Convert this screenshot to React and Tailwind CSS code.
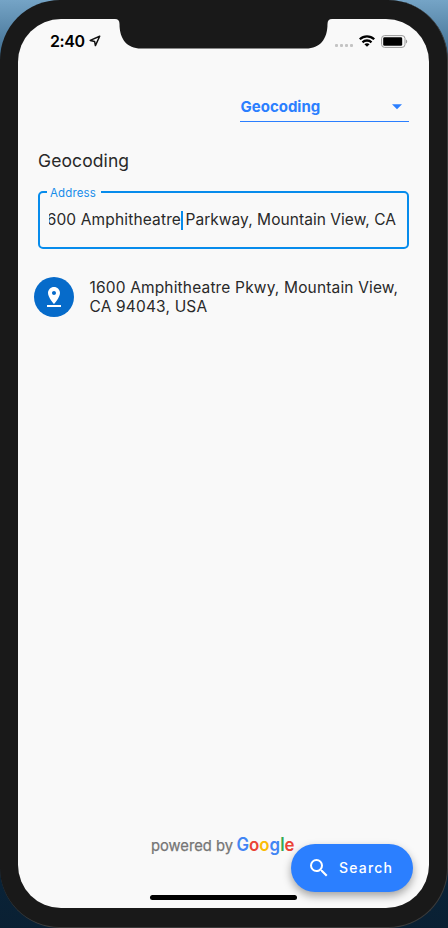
import React from "react";

function Notch() {
  return (
    <svg className="absolute left-[97px] top-0 h-[31px] w-[220px]" viewBox="0 0 220 31" fill="#191919">
      <path d="M0 -1V0C3 0 4.500 1.500 4.500 5C4.500 20 12 29.500 26 29.500H191C205 29.500 212.500 20 212.500 5C212.500 1.500 214 0 217 0V-1Z" />
    </svg>
  );
}

function StatusBar() {
  return (
    <header className="relative flex h-[45px] items-center pl-[32px] pr-[21px]">
      <Notch />
      <span className="mb-[1px] text-[16px] font-semibold leading-none tracking-[-0.400px] text-black">2:40</span>
      <svg className="mb-[2px] ml-[4px] h-[12px] w-[12px]" viewBox="0 0 12 12" fill="none" stroke="#111" strokeWidth="1.500" strokeLinejoin="round">
        <path d="M10.700 1.300L1.200 5.400L5.600 6.400L6.400 10.600Z" />
      </svg>
      <div className="ml-auto flex items-center">
        <div className="mt-[8px] flex gap-[1.500px]">
          {[0, 1, 2, 3].map((dot) => (
            <i key={dot} className="block h-[3.500px] w-[3.500px] rounded-[1px] bg-[#c4c4c4]" />
          ))}
        </div>
        <svg className="mb-[2px] ml-[6px] h-[12px] w-[16px]" viewBox="0 0 16 12" fill="none" stroke="#000" strokeWidth="2.300">
          <path d="M0.800 4.300C4.900 .3 11.100 .3 15.200 4.300" />
          <path d="M3.500 7.300C6 4.900 10 4.900 12.500 7.300" />
          <path d="M8 11.800L5.400 9.200C6.800 7.900 9.200 7.900 10.600 9.200Z" fill="#000" stroke="none" />
        </svg>
        <svg className="mb-[1px] ml-[6px] h-[13px] w-[27px]" viewBox="0 0 27 13">
          <rect x=".6" y=".6" width="23.400" height="11.800" rx="3" fill="none" stroke="#999" />
          <rect x="2.200" y="2.200" width="19" height="8.600" rx="1.300" fill="#000" />
          <path d="M25 4.500C26.600 5.200 26.600 7.800 25 8.500Z" fill="#999" />
        </svg>
      </div>
    </header>
  );
}

function GoogleAttribution() {
  return (
    <svg className="h-[26px] w-[150px] overflow-visible" viewBox="0 0 150 26" fontFamily="Inter, sans-serif">
      <text x="1" y="17" fontSize="15" fill="#757575" stroke="#757575" strokeWidth=".25" textLength="82" lengthAdjust="spacingAndGlyphs">powered by</text>
      <text x="86.500" y="17" fontSize="18" fontWeight="600" textLength="58" lengthAdjust="spacingAndGlyphs">
        <tspan fill="#4285f4">G</tspan><tspan fill="#ea4335">o</tspan><tspan fill="#fbbc05">o</tspan><tspan fill="#4285f4">g</tspan><tspan fill="#34a853">l</tspan><tspan fill="#ea4335">e</tspan>
      </text>
    </svg>
  );
}

export default function App() {
  return (
    <div className="h-[928px] w-[448px] overflow-hidden bg-[linear-gradient(180deg,#75a4c6_0,#416f92_55px,#232323_75px,#232323_840px,#092338_870px,#0a2033_928px)] font-['Inter','Liberation_Sans',sans-serif]">
      <div className="h-[928px] w-[448px] rounded-[60px] border border-l-0 border-t-0 border-[#3b3b3b] bg-[#191919] pl-[18px] pt-[19px]">
        <div className="relative flex h-[889px] w-[411px] flex-col overflow-hidden rounded-[43px] bg-[#f9f9f9]">
          <StatusBar />
          <main className="flex flex-1 flex-col px-[20px]">
            <div className="mt-[30px] flex h-[28px] w-[169px] justify-between self-end border-b border-[#2b7fff] pr-[7px] pl-[0.500px] pt-[3px] text-[#2b7fff]">
              <span className="pt-[1px] text-[15px] font-bold leading-[18px]">Geocoding</span>
              <svg className="mt-[7px] h-[6px] w-[10px]" viewBox="0 0 10 6" fill="currentColor">
                <path d="M0 .3H10L5 5.300Z" />
              </svg>
            </div>
            <h1 className="mt-[28px] text-[17.500px] font-normal leading-[22px] tracking-[0.100px] text-[#292929]">Geocoding</h1>
            <div className="relative mt-[18.500px] h-[58.500px] rounded-[5px] border-2 border-[#078cec] pl-[9px] pr-[11px]">
              <label className="absolute left-[7px] top-[-6.500px] bg-[#f9f9f9] pl-[3px] pr-[5px] text-[11.500px] leading-[15px] tracking-[0.150px] text-[#168cea]">Address</label>
              <div className="flex h-[55px] items-center justify-end overflow-hidden whitespace-nowrap text-[15.500px] text-[#292929]">
                <span className="tracking-[0.150px]">1600 Amphitheatre</span>
                <i className="mr-[-2px] h-[19px] w-[2px] shrink-0 bg-[#078cec]" />
                <span className="whitespace-pre tracking-[0.050px]"> Parkway, Mountain View, CA</span>
              </div>
            </div>
            <div className="-ml-[4px] mt-[28px] flex h-[40px] items-center">
              <div className="flex h-[40px] w-[40px] shrink-0 items-center justify-center rounded-full bg-[#066bca]">
                <svg className="h-[24px] w-[24px]" viewBox="0 0 24 24" fill="white">
                  <path d="M18 8c0-3.310-2.690-6-6-6S6 4.690 6 8c0 4.500 6 11 6 11s6-6.500 6-11zm-8 0c0-1.100.9-2 2-2s2 .9 2 2-.89 2-2 2c-1.100 0-2-.9-2-2zM5 20v2h14v-2H5z" />
                </svg>
              </div>
              <p className="ml-[15.500px] whitespace-nowrap text-[15.500px] leading-[19px] tracking-[0.160px] text-[#292929]">
                1600 Amphitheatre Pkwy, Mountain View,<br />CA 94043, USA
              </p>
            </div>
            <div className="mb-[48px] ml-[112px] mt-auto flex h-[26px]">
              <GoogleAttribution />
            </div>
          </main>
          <div className="absolute bottom-[8px] left-[132px] h-[5px] w-[147px] rounded-full bg-black" />
          <button className="absolute bottom-[16px] right-[16px] flex h-[48px] w-[122px] items-center rounded-full bg-[#2b7fff] pl-[16px] text-white shadow-[0_4px_8px_rgba(0,0,0,0.35)]">
            <svg className="h-[24px] w-[24px]" viewBox="0 0 24 24" fill="white">
              <path d="M15.500 14h-.79l-.28-.27A6.471 6.471 0 0 0 16 9.500 6.500 6.500 0 1 0 9.500 16c1.610 0 3.090-.59 4.230-1.570l.27.28v.79l5 4.990L20.490 19l-4.990-5zm-6 0C7.010 14 5 11.990 5 9.500S7.010 5 9.500 5 14 7.010 14 9.500 11.990 14 9.500 14z" />
            </svg>
            <span className="ml-[8px] text-[14px] font-medium leading-none tracking-[1.200px]">Search</span>
          </button>
        </div>
      </div>
    </div>
  );
}
